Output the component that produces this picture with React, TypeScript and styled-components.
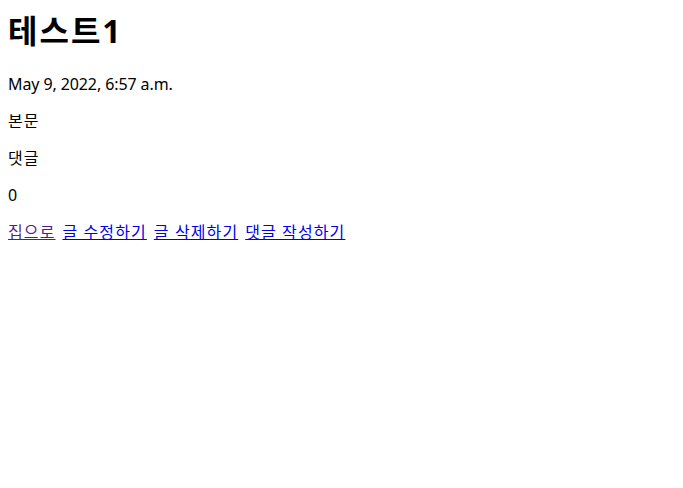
import { FC } from "react";
import styled, { createGlobalStyle } from "styled-components";

// global page reset
const GlobalStyle = createGlobalStyle`
  body {
    margin: 8px;
    background: #ffffff;
    color: #000000;
    font-family: "Noto Sans", "Noto Sans CJK KR", sans-serif;
    font-size: 16px;
  }
`;

const Title = styled.h1`
  margin: 1px 0 22px;
  font-size: 32px;
  font-weight: 700;
  line-height: 43px;
  letter-spacing: 2px;
`;

const Text = styled.p<{ $hangul?: boolean }>`
  margin: 16px 0;
  line-height: 21px;
  letter-spacing: ${(p) => (p.$hangul ? "1px" : "-0.1px")};
`;

const LinkRow = styled.p`
  margin: 16px 0;
  line-height: 21px;
  display: flex;
  gap: 7px;
  letter-spacing: 1.1px;
`;

const Anchor = styled.a<{ $visited?: boolean }>`
  color: ${(p) => (p.$visited ? "#551a8b" : "#0000ee")};
  text-decoration: underline;
  cursor: pointer;
`;

interface PostProps {
  title?: string;
  date?: string;
  body?: string;
  commentCount?: number;
}

const App: FC<PostProps> = ({
  title = "테스트1",
  date = "May 9, 2022, 6:57 a.m.",
  body = "본문",
  commentCount = 0,
}) => {
  return (
    <>
      <GlobalStyle />
      <Title>{title}</Title>
      <Text>{date}</Text>
      <Text $hangul>{body}</Text>
      <Text $hangul>댓글</Text>
      <Text>{commentCount}</Text>
      <LinkRow>
        <Anchor $visited href="#">집으로</Anchor>
        <Anchor href="#">글 수정하기</Anchor>
        <Anchor href="#">글 삭제하기</Anchor>
        <Anchor href="#">댓글 작성하기</Anchor>
      </LinkRow>
    </>
  );
};

export default App;
